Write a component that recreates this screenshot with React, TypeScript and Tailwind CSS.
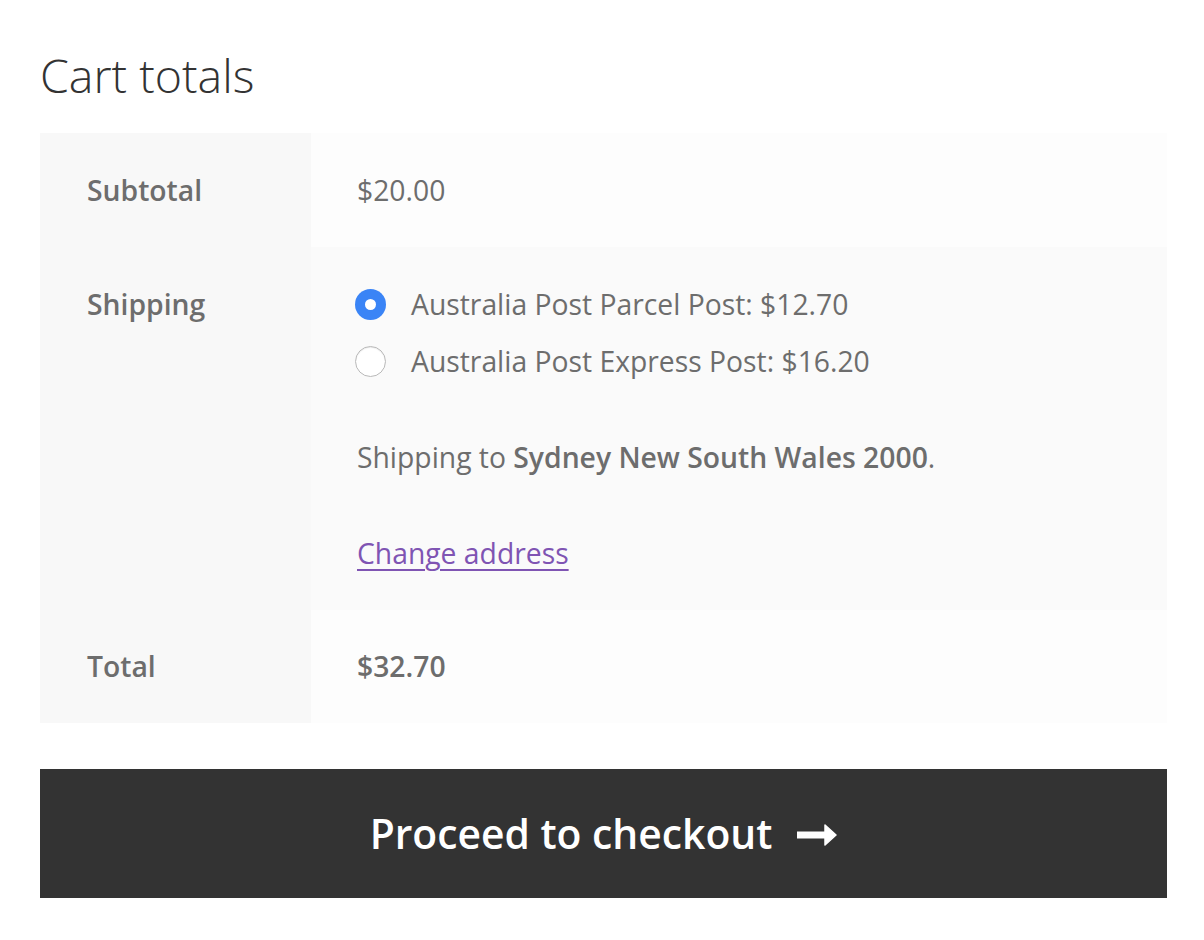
import React from "react";

function Radio({ checked }: { checked: boolean }) {
  if (checked) {
    return (
      <span className="flex h-[31px] w-[31px] shrink-0 items-center justify-center rounded-full bg-[#3a84f6]">
        <span className="h-[11px] w-[11px] rounded-full bg-white" />
      </span>
    );
  }
  return (
    <span className="h-[31px] w-[31px] shrink-0 rounded-full border border-[#b9b9b9] bg-white shadow-[inset_0_1px_1px_rgba(0,0,0,0.08)]" />
  );
}

export default function App() {
  return (
    <div
      className="min-h-[940px] bg-white pl-[40px] pr-[37px] pt-[47px] text-[28.3px] leading-[45px] text-[#6d6d6d]"
      style={{ fontFamily: '"Open Sans", "Noto Sans", sans-serif' }}
    >
      <h2 className="mb-[30px] text-[46.5px] font-light leading-[56px] text-[#333333]">Cart totals</h2>

      <div className="grid grid-cols-[271px_1fr]">
        {/* Subtotal */}
        <div className="bg-[#f8f8f8] py-[34.5px] pl-[47px] font-semibold">Subtotal</div>
        <div className="bg-[#fdfdfd] py-[34.5px] pl-[46px]">$20.00</div>

        {/* Shipping */}
        <div className="bg-[#f8f8f8] py-[34.5px] pl-[47px] font-semibold">Shipping</div>
        <div className="flex flex-col bg-[#fafafa] py-[34.5px] pl-[44px]">
          <div className="flex items-center gap-[25px]">
            <Radio checked />
            <span>Australia Post Parcel Post: $12.70</span>
          </div>
          <div className="mt-[12px] flex items-center gap-[25px]">
            <Radio checked={false} />
            <span>Australia Post Express Post: $16.20</span>
          </div>
          <p className="mt-[51px] pl-[2px]">
            Shipping to <span className="font-semibold">Sydney New South Wales 2000</span>.
          </p>
          <p className="mt-[51px] pl-[2px]">
            <a href="#" className="text-[#7f54b3] underline underline-offset-[5px] decoration-[2px]">
              Change address
            </a>
          </p>
        </div>

        {/* Total */}
        <div className="bg-[#f8f8f8] py-[34px] pl-[47px] font-semibold">Total</div>
        <div className="bg-[#fdfdfd] py-[34px] pl-[46px] font-semibold">$32.70</div>
      </div>

      <a
        href="#"
        className="mt-[46px] flex h-[129px] items-center justify-center gap-[25px] bg-[#333333] text-[40.8px] font-semibold text-white"
      >
        <span>Proceed to checkout</span>
        <svg width="40" height="22" viewBox="0 0 40 22" className="mt-[2px]">
          <rect x="0" y="7.5" width="31" height="7" fill="#ffffff" />
          <path d="M28 1 L39 11 L28 21 Z" fill="#ffffff" strokeLinejoin="round" stroke="#ffffff" strokeWidth="1.5" />
        </svg>
      </a>
    </div>
  );
}
